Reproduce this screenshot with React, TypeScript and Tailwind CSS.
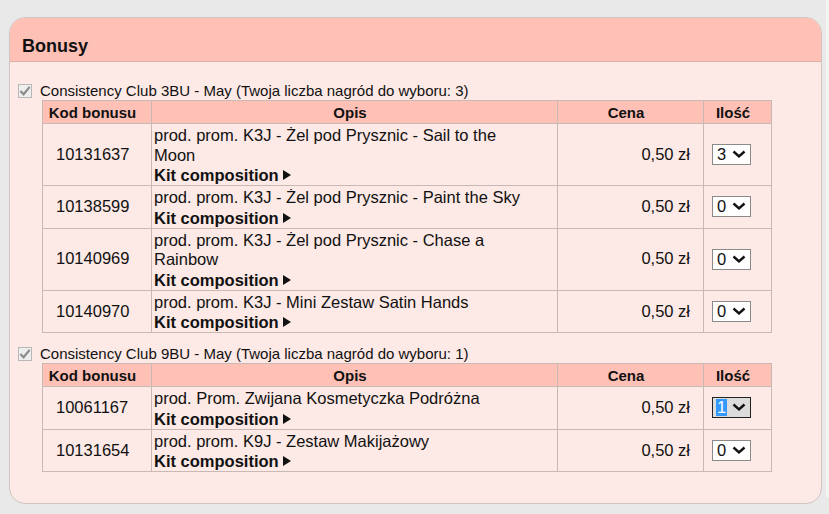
import React from "react";

type Row = { code: string; lines: string[]; qty: string; focused?: boolean };

const group1: Row[] = [
  { code: "10131637", lines: ["prod. prom. K3J - Żel pod Prysznic - Sail to the", "Moon"], qty: "3" },
  { code: "10138599", lines: ["prod. prom. K3J - Żel pod Prysznic - Paint the Sky"], qty: "0" },
  { code: "10140969", lines: ["prod. prom. K3J - Żel pod Prysznic - Chase a", "Rainbow"], qty: "0" },
  { code: "10140970", lines: ["prod. prom. K3J - Mini Zestaw Satin Hands"], qty: "0" },
];

const group2: Row[] = [
  { code: "10061167", lines: ["prod. Prom. Zwijana Kosmetyczka Podróżna"], qty: "1", focused: true },
  { code: "10131654", lines: ["prod. prom. K9J - Zestaw Makijażowy"], qty: "0" },
];

const Chevron = () => (
  <svg width="14" height="9" viewBox="0 0 14 9">
    <path d="M1.5 1.5 L7 6.5 L12.5 1.5" fill="none" stroke="#111" strokeWidth="2.4" />
  </svg>
);

const Qty = ({ value, focused }: { value: string; focused?: boolean }) => (
  <div
    className={
      "flex items-center w-[39px] h-[21px] border pl-[3px] gap-[5px] " +
      (focused ? "border-[#222] bg-[#dcdcdc]" : "border-[#8a8a8a] bg-white")
    }
  >
    <span
      className={
        "text-[16.5px] leading-[17px] px-[1px] " + (focused ? "bg-[#3399ff] text-white" : "text-[#111]")
      }
    >
      {value}
    </span>
    <Chevron />
  </div>
);

const Check = () => (
  <div className="w-[14px] h-[14px] border border-[#b8b8b8] bg-[#eeeeee] flex items-center justify-center">
    <svg width="13" height="12" viewBox="0 0 13 12">
      <path d="M1.5 6 L5 9.5 L11.5 1.5" fill="none" stroke="#8c8c8c" strokeWidth="2.4" />
    </svg>
  </div>
);

const Group = ({ title, rows, className }: { title: string; rows: Row[]; className?: string }) => (
  <div className={className}>
    <div className="flex items-center h-[18px] pl-[8px] gap-[8px]">
      <Check />
      <span className="text-[15px] text-[#111]">{title}</span>
    </div>
    <table className="ml-[32px] w-[729px] border-collapse table-fixed">
      <colgroup>
        <col className="w-[109px]" />
        <col className="w-[406px]" />
        <col className="w-[146px]" />
        <col className="w-[68px]" />
      </colgroup>
      <thead>
        <tr className="bg-[#ffc0b5] text-[15px] font-bold text-[#111]">
          {["Kod bonusu", "Opis", "Cena", "Ilość"].map((h) => (
            <th key={h} className="border border-[#c9b9b5] h-[23px] p-0 pr-[9px] leading-[17px] text-center">
              {h}
            </th>
          ))}
        </tr>
      </thead>
      <tbody>
        {rows.map((r) => (
          <tr key={r.code} className="text-[16.5px] text-[#111] leading-[19.5px]">
            <td className="border border-[#c9b9b5] pl-[13px] align-middle">{r.code}</td>
            <td className="border border-[#c9b9b5] pl-[2px] pt-[2px] pb-0 align-top">
              {r.lines.map((l) => (
                <div key={l}>{l}</div>
              ))}
              <div className="flex items-center gap-[4px] font-bold leading-[20px]">
                Kit composition
                <svg width="8" height="10" viewBox="0 0 8 10">
                  <path d="M0 0 L8 5 L0 10 Z" fill="#111" />
                </svg>
              </div>
            </td>
            <td className="border border-[#c9b9b5] pr-[13px] text-right align-middle">0,50 zł</td>
            <td className="border border-[#c9b9b5] pl-[8px] align-middle">
              <Qty value={r.qty} focused={r.focused} />
            </td>
          </tr>
        ))}
      </tbody>
    </table>
  </div>
);

export default function App() {
  return (
    <div className="w-[829px] h-[514px] bg-[#e9e9e9] pt-[17px] pl-[9px] flex font-['Liberation_Sans',Arial,sans-serif]">
      <div className="w-[813px] h-[487px] rounded-[16px] border border-[#cfc6c4] bg-[#fde9e5] overflow-hidden flex flex-col">
        <div className="h-[44px] shrink-0 bg-[#ffc0b5] border-b border-[#dfb0a8] flex items-center pl-[12px] pt-[14px]">
          <span className="text-[18px] font-bold text-[#111]">Bonusy</span>
        </div>
        <Group
          className="mt-[20px]"
          title="Consistency Club 3BU - May (Twoja liczba nagród do wyboru: 3)"
          rows={group1}
        />
        <Group
          className="mt-[12px]"
          title="Consistency Club 9BU - May (Twoja liczba nagród do wyboru: 1)"
          rows={group2}
        />
      </div>
      <div className="ml-[4px] w-[3px] h-[497px] -mt-[17px] bg-[#f4f4f4]" />
    </div>
  );
}
